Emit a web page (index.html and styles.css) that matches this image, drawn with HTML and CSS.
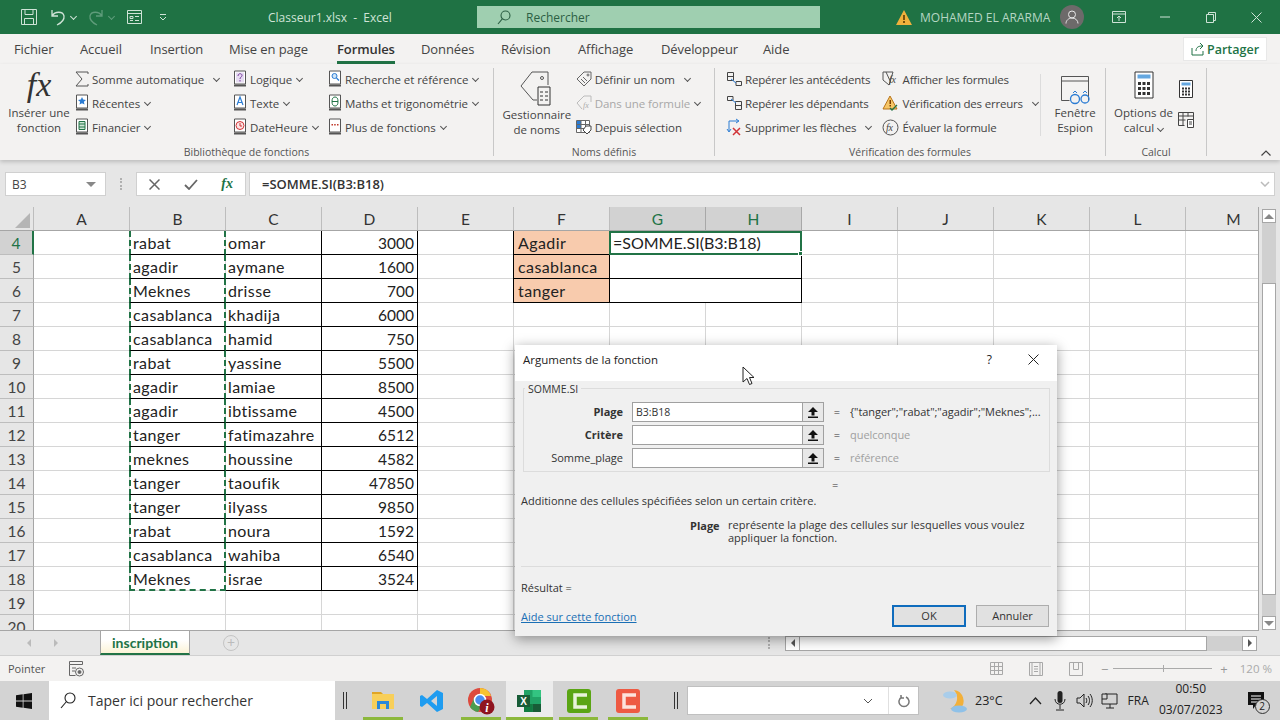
FILE: index.html
```html
<!DOCTYPE html>
<html lang="fr">
  <head>
    <meta charset="UTF-8" />
    <title>Classeur1.xlsx - Excel</title>
    <link rel="stylesheet" href="styles.css" />
  </head>
  <body>
    <header class="titlebar">
      <div class="qat">
        <svg class="qat-save" width="18" height="18" viewBox="0 0 18 18" fill="none" stroke="#cfe3d7"><path d="M1.500 1.500h15v15h-15zM5 1.500v5h8v-5M4.500 16.500v-6h9v6" /></svg>
        <svg class="qat-undo" width="16" height="18" viewBox="0 0 16 18" fill="none" stroke="#cfe3d7" stroke-width="1.300"><path d="M2 2v6h6M2 8c3-5 11-5 12 0 .6 4-3 7-7 9" /></svg>
        <span class="chev chev-light"></span>
        <svg class="qat-redo" width="16" height="18" viewBox="0 0 16 18" fill="none" stroke="#5f9c7b" stroke-width="1.300"><path d="M14 2v6H8M14 8C11 3 3 3 2 8c-.6 4 3 7 7 9" /></svg>
        <span class="chev chev-dim"></span>
        <svg class="qat-form" width="17" height="16" viewBox="0 0 17 16" fill="none" stroke="#cfe3d7"><path d="M1.500 1.500h14v13h-14zM1.500 4.500h14M4 7.500h3v2H4zM9 7.500h4M4 11.500h3M9 11.500h4" /></svg>
        <svg class="qat-more" width="8" height="8" viewBox="0 0 8 8" fill="none" stroke="#cfe3d7"><path d="M1 1.500h6M1 4l3 3 3-3" /></svg>
      </div>
      <div class="doc-title">Classeur1.xlsx&nbsp; - &nbsp;Excel</div>
      <div class="searchbox">
        <svg width="14" height="15" viewBox="0 0 14 15" fill="none" stroke="#2c5f44" stroke-width="1.100"><circle cx="8.500" cy="5.500" r="4.500" /><path d="M5.300 8.800 1 14" /></svg>
        <span>Rechercher</span>
      </div>
      <svg class="warn" width="16" height="15" viewBox="0 0 16 15"><path d="M8 0l8 15H0z" fill="#f0b13c" /><path d="M7.200 5h1.600v5H7.200zM7.200 11h1.600v2H7.200z" fill="#5b3b00" /></svg>
      <div class="username">MOHAMED EL ARARMA</div>
      <div class="avatar">
        <svg width="14" height="14" viewBox="0 0 14 14" fill="none" stroke="#e8e8e8"><circle cx="7" cy="4.500" r="3.500" /><path d="M1 13.500c0-3 2.500-5.500 6-5.500s6 2.500 6 5.500" /></svg>
      </div>
      <svg class="win-ribbon" width="14" height="12" viewBox="0 0 14 12" fill="none" stroke="#cfe3d7"><path d="M.5.5h13v11H.5zM.5 3h13M7 10V5M5 7l2-2 2 2" /></svg>
      <svg class="win-min" width="10" height="2" viewBox="0 0 10 2" stroke="#cfe3d7"><path d="M0 1h10" /></svg>
      <svg class="win-max" width="10" height="11" viewBox="0 0 10 11" fill="none" stroke="#cfe3d7"><path d="M.5 2.500h7v8h-7zM2.500 2.500v-2h7v8h-2" /></svg>
      <svg class="win-close" width="11" height="11" viewBox="0 0 11 11" stroke="#cfe3d7"><path d="M.5.5l10 10M10.500.5l-10 10" /></svg>
    </header>

    <nav class="tabs">
      <span class="tab tab-fichier">Fichier</span>
      <span class="tab tab-accueil">Accueil</span>
      <span class="tab tab-insertion">Insertion</span>
      <span class="tab tab-mise">Mise en page</span>
      <span class="tab tab-formules active">Formules</span>
      <span class="tab tab-donnees">Données</span>
      <span class="tab tab-revision">Révision</span>
      <span class="tab tab-affichage">Affichage</span>
      <span class="tab tab-dev">Développeur</span>
      <span class="tab tab-aide">Aide</span>
      <div class="share">
        <svg width="14" height="14" viewBox="0 0 14 14" fill="none" stroke="#217346"><path d="M1 6v7h11V9M5 9c0-4 3-5 6-5M9 1l3 3-3 3" /></svg>
        Partager
      </div>
    </nav>

    <section class="ribbon">
      <div class="group group-lib">
        <div class="group-body">
          <div class="big-btn big-fx">
            <span class="fx-big">fx</span>
            <span class="big-label">Insérer une<br />fonction</span>
          </div>
          <div class="rcol rcol-1">
            <div class="ritem">
              <svg class="ico" width="14" height="16" viewBox="0 0 14 16" fill="none" stroke="#555"><path d="M13 3V1H1l6 7-6 7h12v-2" /></svg>
              <span>Somme automatique</span><span class="chev chev-gap"></span>
            </div>
            <div class="ritem">
              <svg class="ico" width="14" height="18" viewBox="0 0 14 18"><path d="M1.500 1h11v13h-11z" fill="#fff" stroke="#555" /><path d="M1 15.500h12" stroke="#555" stroke-width="2" /><path d="M7 3l1.200 2.600 2.800.3-2.100 1.900.6 2.800L7 9.200l-2.500 1.400.6-2.800L3 5.900l2.800-.3z" fill="#2b7cd3" /></svg>
              <span>Récentes</span><span class="chev"></span>
            </div>
            <div class="ritem">
              <svg class="ico" width="14" height="18" viewBox="0 0 14 18"><path d="M1.500 1h11v13h-11z" fill="#fff" stroke="#555" /><path d="M1 15.500h12" stroke="#555" stroke-width="2" /><path d="M4 3.500h6v8H4zM4 6h6M4 9h6" fill="#cfe6d6" stroke="#217346" /></svg>
              <span>Financier</span><span class="chev"></span>
            </div>
          </div>
          <div class="rcol rcol-2">
            <div class="ritem">
              <svg class="ico" width="14" height="18" viewBox="0 0 14 18"><path d="M1.500 1h11v13h-11z" fill="#fff" stroke="#555" /><path d="M1 15.500h12" stroke="#555" stroke-width="2" /><path d="M3 2.500h8v10H3z" fill="#e6dcf2" /><path d="M5 6c0-3 4-3 4-.5C9 7 7 7 7 9M7 10v1.500" fill="none" stroke="#7b3fa0" /></svg>
              <span>Logique</span><span class="chev"></span>
            </div>
            <div class="ritem">
              <svg class="ico" width="14" height="18" viewBox="0 0 14 18"><path d="M1.500 1h11v13h-11z" fill="#fff" stroke="#555" /><path d="M1 15.500h12" stroke="#555" stroke-width="2" /><path d="M4 11l3-8 3 8M5 8.500h4" fill="none" stroke="#2b7cd3" stroke-width="1.200" /></svg>
              <span>Texte</span><span class="chev"></span>
            </div>
            <div class="ritem">
              <svg class="ico" width="14" height="18" viewBox="0 0 14 18"><path d="M1.500 1h11v13h-11z" fill="#fff" stroke="#555" /><path d="M1 15.500h12" stroke="#555" stroke-width="2" /><circle cx="7" cy="7.500" r="4" fill="#fbe3e3" stroke="#d13438" /><path d="M7 5v3h2" fill="none" stroke="#d13438" /></svg>
              <span>DateHeure</span><span class="chev"></span>
            </div>
          </div>
          <div class="rcol rcol-3">
            <div class="ritem">
              <svg class="ico" width="14" height="18" viewBox="0 0 14 18"><path d="M1.500 1h11v13h-11z" fill="#fff" stroke="#555" /><path d="M1 15.500h12" stroke="#555" stroke-width="2" /><circle cx="6.500" cy="6" r="2.500" fill="#cfe4f7" stroke="#2b7cd3" /><path d="M8.500 8l2.500 2.500" stroke="#2b7cd3" stroke-width="1.300" /></svg>
              <span>Recherche et référence</span><span class="chev"></span>
            </div>
            <div class="ritem">
              <svg class="ico" width="14" height="18" viewBox="0 0 14 18"><path d="M1.500 1h11v13h-11z" fill="#fff" stroke="#555" /><path d="M1 15.500h12" stroke="#555" stroke-width="2" /><ellipse cx="7" cy="7.500" rx="3" ry="4.500" fill="none" stroke="#217346" /><path d="M4 7.500h6" stroke="#217346" /></svg>
              <span>Maths et trigonométrie</span><span class="chev"></span>
            </div>
            <div class="ritem">
              <svg class="ico" width="14" height="18" viewBox="0 0 14 18"><path d="M1.500 1h11v13h-11z" fill="#fff" stroke="#555" /><path d="M1 15.500h12" stroke="#555" stroke-width="2" /><path d="M3.500 6h1.500v1.500H3.500zM6.200 6h1.500v1.500H6.200zM9 6h1.500v1.500H9z" fill="#c0392b" /></svg>
              <span>Plus de fonctions</span><span class="chev"></span>
            </div>
          </div>
        </div>
        <div class="group-label">Bibliothèque de fonctions</div>
      </div>

      <div class="group group-names">
        <div class="group-body">
          <div class="big-btn big-names">
            <svg class="big-ico" width="34" height="36" viewBox="0 0 34 36" fill="none" stroke="#555"><path d="M12 1h16v13M12 1L1 15l12 14h4" /><circle cx="22" cy="7" r="1.500" /><path d="M18 16h12v18H18zM20 21h3M25 21h3M20 25h3M25 25h3M20 29h3M25 29h3" stroke="#333" /></svg>
            <span class="big-label">Gestionnaire<br />de noms</span>
          </div>
          <div class="rcol rcol-names">
            <div class="ritem">
              <svg class="ico" width="16" height="16" viewBox="0 0 16 16" fill="none" stroke="#666"><path d="M8 1h7v7l-7 7-7-7zM5 8l4 4M7 6l4 4" /><circle cx="12" cy="4" r="1" /></svg>
              <span>Définir un nom</span><span class="chev chev-gap"></span>
            </div>
            <div class="ritem ritem-off">
              <svg class="ico" width="16" height="16" viewBox="0 0 16 16" fill="none" stroke="#bbb"><path d="M8 1h7v6M8 1L1 8l5 6" /><text x="7" y="13" font-family="Liberation Serif" font-style="italic" font-size="8" fill="#aaa" stroke="none">fx</text></svg>
              <span>Dans une formule</span><span class="chev"></span>
            </div>
            <div class="ritem">
              <svg class="ico" width="16" height="16" viewBox="0 0 16 16"><path d="M.5 1.500h13v12H.5z" fill="#fff" stroke="#666" /><path d="M1 2h4v4H1zM1 6h4v4H1z" fill="#2b7cd3" /><path d="M.5 5.500h13M.5 9.500h13M5 1.500v12M9.500 1.500v12" stroke="#666" fill="none" /><path d="M10 7h5v4l-4 4-4-4z" fill="#fff" stroke="#444" /></svg>
              <span>Depuis sélection</span>
            </div>
          </div>
        </div>
        <div class="group-label">Noms définis</div>
      </div>

      <div class="group group-audit">
        <div class="group-body">
          <div class="rcol rcol-trace">
            <div class="ritem">
              <svg class="ico" width="16" height="16" viewBox="0 0 16 16" fill="none"><path d="M1.500 1.500h6v8h-6zM1.500 5.500h6M10 10.500h5.500v4H10z" stroke="#444" /><path d="M5 8l5 4" stroke="#2b7cd3" /></svg>
              <span>Repérer les antécédents</span>
            </div>
            <div class="ritem">
              <svg class="ico" width="16" height="16" viewBox="0 0 16 16" fill="none"><path d="M1.500 1.500H7v4H1.500zM9.500 6.500h6v8h-6zM9.500 10.500h6" stroke="#444" /><path d="M5 4l5 4" stroke="#2b7cd3" /></svg>
              <span>Repérer les dépendants</span>
            </div>
            <div class="ritem">
              <svg class="ico" width="16" height="18" viewBox="0 0 16 18" fill="none"><path d="M3 13V3h9M1 11l2 3 2-3M10 1l3 2-3 2" stroke="#2b7cd3" /><path d="M7 10l7 7M14 10l-7 7" stroke="#d13438" stroke-width="1.500" /></svg>
              <span>Supprimer les flèches</span><span class="chev chev-gap"></span>
            </div>
          </div>
          <div class="rcol rcol-check">
            <div class="ritem">
              <svg class="ico" width="17" height="16" viewBox="0 0 17 16" fill="none" stroke="#555"><path d="M1 1h10l-4 13-6-5z" /><path d="M4 1l5 11" /><text x="7" y="12" font-family="Liberation Serif" font-style="italic" font-size="10" fill="#444" stroke="none">fx</text></svg>
              <span>Afficher les formules</span>
            </div>
            <div class="ritem">
              <svg class="ico" width="17" height="16" viewBox="0 0 17 16"><path d="M8 1l7 13H1z" fill="#f6c667" stroke="#b8741a" /><path d="M7.500 5h1.500v4H7.500zM7.500 10h1.500v1.500H7.500z" fill="#7a3e00" /><path d="M8 13l2 2 5-5" fill="none" stroke="#217346" stroke-width="1.300" /></svg>
              <span>Vérification des erreurs</span><span class="chev chev-gap"></span>
            </div>
            <div class="ritem">
              <svg class="ico" width="17" height="17" viewBox="0 0 17 17" fill="none" stroke="#555"><circle cx="8.500" cy="8.500" r="7.500" /><text x="4" y="12" font-family="Liberation Serif" font-style="italic" font-size="10" fill="#444" stroke="none">fx</text></svg>
              <span>Évaluer la formule</span>
            </div>
          </div>
          <div class="big-btn big-watch">
            <svg class="big-ico" width="30" height="30" viewBox="0 0 30 30" fill="none"><path d="M1.500 1.500h27v24M1.500 1.500v24h8M1.500 6h27" stroke="#555" /><circle cx="15" cy="24" r="4.500" stroke="#2b7cd3" stroke-width="1.300" /><circle cx="25" cy="24" r="4" stroke="#2b7cd3" stroke-width="1.300" /><path d="M13 18l2-2 2 2M23 18l2-2 2 2" stroke="#2b7cd3" /></svg>
            <span class="big-label">Fenêtre<br />Espion</span>
          </div>
        </div>
        <div class="group-label">Vérification des formules</div>
      </div>

      <div class="group group-calc">
        <div class="group-body">
          <div class="big-btn big-calc">
            <svg class="big-ico" width="20" height="28" viewBox="0 0 20 28"><path d="M1 1h18v26H1z" fill="#fff" stroke="#333" /><path d="M3.500 3.500h13v4h-13z" fill="#64a7e0" /><path d="M4 11h3v3H4zM8.500 11h3v3h-3zM13 11h3v3h-3zM4 16h3v3H4zM8.500 16h3v3h-3zM13 16h3v3h-3zM4 21h3v3H4zM8.500 21h3v3h-3zM13 21h3v3h-3z" fill="#333" /></svg>
            <span class="big-label">Options de<br />calcul<span class="chev chev-inline"></span></span>
          </div>
          <div class="calc-side">
            <svg width="14" height="18" viewBox="0 0 14 18"><path d="M.5.5h13v17H.5z" fill="#fff" stroke="#333" /><path d="M2.500 2.500h9v3h-9z" fill="#64a7e0" /><path d="M3 7.500h2v2H3zM6 7.500h2v2H6zM9 7.500h2v2H9zM3 10.500h2v2H3zM6 10.500h2v2H6zM9 10.500h2v2H9zM3 13.500h2v2H3zM6 13.500h2v2H6zM9 13.500h2v2H9z" fill="#333" /></svg>
            <svg width="16" height="16" viewBox="0 0 16 16" fill="none" stroke="#444"><path d="M.5.500h15v8M.5.500v13h6M.5 4h15M.5 8h7M5 .500v13M10 .500v4" /><path d="M9.500 7.500h6v8h-6z" fill="#fff" /><path d="M11 10h3M11 12h3" /></svg>
          </div>
        </div>
        <div class="group-label">Calcul</div>
      </div>
      <svg class="collapse" width="10" height="6" viewBox="0 0 10 6" fill="none" stroke="#444" stroke-width="1.200"><path d="M.5 5.500L5 1l4.500 4.500" /></svg>
    </section>

    <section class="formulabar">
      <div class="namebox"><span>B3</span><i class="tri"></i></div>
      <span class="grip"></span>
      <div class="fbtns">
        <svg width="11" height="11" viewBox="0 0 11 11" stroke="#666" stroke-width="1.500"><path d="M.5.5l10 10M10.500.5l-10 10" /></svg>
        <svg width="14" height="11" viewBox="0 0 14 11" fill="none" stroke="#666" stroke-width="1.800"><path d="M1 6l4 4 8-9" /></svg>
        <span class="fx-small">fx</span>
      </div>
      <div class="formula"><span>=SOMME.SI(B3:B18)</span>
        <svg width="10" height="6" viewBox="0 0 10 6" fill="none" stroke="#bbb" stroke-width="1.500"><path d="M1 1l4 4 4-4" /></svg>
      </div>
    </section>

    <section class="sheet">
      <div class="gridpane">
        <div class="colheads">
          <span class="corner"><i></i></span>
          <span>A</span><span>B</span><span>C</span><span>D</span><span>E</span><span>F</span>
          <span class="on">G</span><span class="on">H</span>
          <span>I</span><span>J</span><span>K</span><span>L</span><span>M</span>
        </div>
        <div class="rows">
          <div class="row"><span class="rh on">4</span><span class="c b">rabat</span><span class="c cc">omar</span><span class="c d">3000</span><span class="c f">Agadir</span><span class="c g sel">=SOMME.SI(B3:B18)<i class="handle"></i></span></div>
          <div class="row"><span class="rh">5</span><span class="c b">agadir</span><span class="c cc">aymane</span><span class="c d">1600</span><span class="c f">casablanca</span><span class="c g"></span></div>
          <div class="row"><span class="rh">6</span><span class="c b">Meknes</span><span class="c cc">drisse</span><span class="c d">700</span><span class="c f">tanger</span><span class="c g"></span></div>
          <div class="row"><span class="rh">7</span><span class="c b">casablanca</span><span class="c cc">khadija</span><span class="c d">6000</span></div>
          <div class="row"><span class="rh">8</span><span class="c b">casablanca</span><span class="c cc">hamid</span><span class="c d">750</span></div>
          <div class="row"><span class="rh">9</span><span class="c b">rabat</span><span class="c cc">yassine</span><span class="c d">5500</span></div>
          <div class="row"><span class="rh">10</span><span class="c b">agadir</span><span class="c cc">lamiae</span><span class="c d">8500</span></div>
          <div class="row"><span class="rh">11</span><span class="c b">agadir</span><span class="c cc">ibtissame</span><span class="c d">4500</span></div>
          <div class="row"><span class="rh">12</span><span class="c b">tanger</span><span class="c cc">fatimazahre</span><span class="c d">6512</span></div>
          <div class="row"><span class="rh">13</span><span class="c b">meknes</span><span class="c cc">houssine</span><span class="c d">4582</span></div>
          <div class="row"><span class="rh">14</span><span class="c b">tanger</span><span class="c cc">taoufik</span><span class="c d">47850</span></div>
          <div class="row"><span class="rh">15</span><span class="c b">tanger</span><span class="c cc">ilyass</span><span class="c d">9850</span></div>
          <div class="row"><span class="rh">16</span><span class="c b">rabat</span><span class="c cc">noura</span><span class="c d">1592</span></div>
          <div class="row"><span class="rh">17</span><span class="c b">casablanca</span><span class="c cc">wahiba</span><span class="c d">6540</span></div>
          <div class="row"><span class="rh">18</span><span class="c b last">Meknes</span><span class="c cc">israe</span><span class="c d">3524</span></div>
          <div class="row"><span class="rh">19</span></div>
          <div class="row"><span class="rh">20</span></div>
        </div>
      </div>
      <div class="vscroll">
        <span class="sb-btn"><i class="tri tri-up"></i></span>
        <span class="sb-thumb"></span>
        <span class="sb-btn"><i class="tri"></i></span>
      </div>
    </section>

    <section class="sheetbar">
      <div class="sheetnav">
        <i class="arrow arrow-l"></i>
        <i class="arrow arrow-r"></i>
      </div>
      <div class="sheettab">inscription</div>
      <span class="addsheet">+</span>
      <span class="hgrip"></span>
      <div class="hscroll">
        <span class="hbtn"><i class="arrow arrow-l dark"></i></span>
        <span class="hthumb"></span>
        <span class="htrack"></span>
        <span class="hbtn"><i class="arrow arrow-r dark"></i></span>
      </div>
    </section>

    <footer class="statusbar">
      <span>Pointer</span>
      <svg class="st-macro" width="15" height="16" viewBox="0 0 15 16" fill="none" stroke="#666"><path d="M.5.5h13v3H.5zM.5 3.500v11h6M3 7h4M3 10h3" /><circle cx="10.500" cy="11" r="4" /><circle cx="10.500" cy="11" r="1.500" fill="#666" /></svg>
      <div class="st-right">
        <svg width="13" height="13" viewBox="0 0 13 13" fill="none" stroke="#a8a8a8"><path d="M.5.5h12v12H.5zM4.500.5v12M8.500.5v12M.5 4.500h12M.5 8.500h12" /></svg>
        <svg width="14" height="14" viewBox="0 0 14 14" fill="none" stroke="#a8a8a8"><path d="M.5.5h13v13H.5zM3 .5v13M11 .5v13M5 4.500h4M5 7h4M5 9.500h4" /></svg>
        <svg width="14" height="14" viewBox="0 0 14 14" fill="none" stroke="#a8a8a8"><path d="M.5.5h13v13H.5zM4.500.5v7h5v-7" /></svg>
        <div class="zoom"><span class="zm">−</span><span class="slider"><i></i></span><span class="zm">+</span></div>
        <span class="zoompct">120 %</span>
      </div>
    </footer>

    <footer class="taskbar">
      <svg class="tb-win" width="16" height="16" viewBox="0 0 16 16" fill="#111"><path d="M0 2.300l6.700-1v6.300H0zM7.500 1.200L16 0v7.600H7.500zM0 8.400h6.700v6.300l-6.700-1zM7.500 8.400H16V16l-8.500-1.200z" /></svg>
      <div class="tb-search">
        <svg width="16" height="17" viewBox="0 0 16 17" fill="none" stroke="#222" stroke-width="1.100"><circle cx="10" cy="6" r="5" /><path d="M6.500 9.500L1 16" /></svg>
        <span>Taper ici pour rechercher</span>
      </div>
      <span class="tb-bars"></span>
      <div class="tb-apps">
        <span class="tb-app ul app-w40">
          <svg width="22" height="22" viewBox="0 0 22 22"><path d="M0 2h9l2 2h-11z" fill="#e0a526" /><path d="M0 4h22v15H0z" fill="#f8cf59" /><path d="M5 11h12v8h-3v-5H8v5H5z" fill="#2b88d8" /></svg>
        </span>
        <span class="tb-app app-w58">
          <svg width="24" height="24" viewBox="0 0 24 24"><path d="M17 1l6 3v16l-6 3-10-9-5 4-2-1V7l2-1 5 4z" fill="#1f9cf0" /><path d="M17 7v10l-6-5z" fill="#d4d4d4" /></svg>
        </span>
        <span class="tb-app ul app-w40">
          <svg width="28" height="28" viewBox="0 0 28 28"><circle cx="13" cy="13" r="12" fill="#dd4b3e" /><path d="M13 1a12 12 0 0 1 11 8H13z" fill="#f7c331" /><path d="M3 20L8 9l6 11 -3 5A12 12 0 0 1 3 20z" fill="#4a9d50" /><circle cx="13" cy="13" r="5.500" fill="#4a8ef0" stroke="#fff" stroke-width="1.500" /><circle cx="20" cy="20" r="7.500" fill="#8f1420" /><text x="20" y="25" text-anchor="middle" font-family="Liberation Serif" font-style="italic" font-weight="bold" font-size="12" fill="#fff">i</text></svg>
        </span>
        <span class="tb-app ul tb-active">
          <svg width="25" height="22" viewBox="0 0 25 22"><path d="M7 0h17v22H7z" fill="#21a366" /><path d="M15.500 0H24v7h-8.500z" fill="#33c481" /><path d="M15.500 14H24v8h-8.500z" fill="#185c37" /><path d="M7 14h8.500v8H7z" fill="#107c41" /><path d="M0 5h13v12H0z" fill="#185c37" /><text x="6.500" y="15" text-anchor="middle" font-family="Liberation Sans" font-weight="bold" font-size="10" fill="#fff">X</text></svg>
        </span>
        <span class="tb-app ul app-w39">
          <svg width="24" height="24" viewBox="0 0 24 24"><rect width="24" height="24" rx="3" fill="#5aa514" /><path d="M20 6H8v12h12" fill="none" stroke="#e8f3da" stroke-width="3.500" /></svg>
        </span>
        <span class="tb-app ul app-w40 app-last">
          <svg width="24" height="24" viewBox="0 0 24 24"><rect width="24" height="24" rx="3" fill="#ee5a43" /><path d="M20 6H8v12h12" fill="none" stroke="#fde3dc" stroke-width="3.500" /></svg>
        </span>
      </div>
      <span class="tb-bars tb-bars-2"></span>
      <div class="tb-input">
        <svg class="tb-chev" width="10" height="6" viewBox="0 0 10 6" fill="none" stroke="#555"><path d="M1 1l4 4 4-4" /></svg>
        <span class="tb-refresh">
          <svg width="12" height="14" viewBox="0 0 12 14" fill="none" stroke="#777" stroke-width="1.500"><path d="M8 3a5 5 0 1 1-4 0M3 1v3h3" /></svg>
        </span>
      </div>
      <svg class="tb-weather" width="24" height="26" viewBox="0 0 24 26"><path d="M11 2a11 11 0 0 1 6 19H7A12 12 0 0 0 11 2z" fill="#f2b03a" /><ellipse cx="7" cy="7" rx="7" ry="3.500" fill="#a9cdea" /><ellipse cx="16" cy="21" rx="8" ry="3.500" fill="#8fc1e8" /></svg>
      <span class="tb-temp">23°C</span>
      <svg class="tb-up" width="13" height="8" viewBox="0 0 13 8" fill="none" stroke="#222" stroke-width="1.300"><path d="M1 7l5.500-6L12 7" /></svg>
      <svg class="tb-mic" width="12" height="20" viewBox="0 0 12 20"><rect x="3.500" y="0" width="5" height="12" rx="2.500" fill="#222" /><path d="M1 8c0 7 10 7 10 0M6 14v4M2 19h8" fill="none" stroke="#222" /></svg>
      <svg class="tb-speaker" width="17" height="15" viewBox="0 0 17 15" fill="none" stroke="#222"><path d="M1 5v5h3l4 4V1L4 5zM10 5c1 1.500 1 3.500 0 5M12 3c2 2.500 2 6.500 0 9M14 1c3 4 3 9 0 13" /></svg>
      <svg class="tb-net" width="17" height="16" viewBox="0 0 17 16" fill="none" stroke="#222"><path d="M4 1h12v10H1V6M9 11v4M5 15h8" /><path d="M1 1h5v5H1z" fill="#d4d4d4" /></svg>
      <span class="tb-lang">FRA</span>
      <div class="tb-clock"><span>00:50</span><span>03/07/2023</span></div>
      <div class="tb-notif">
        <svg width="16" height="18" viewBox="0 0 16 18"><path d="M0 0h16v13H8l-3 4v-4H0z" fill="#111" /><path d="M3 4h10M3 7h10M3 10h7" stroke="#fff" /></svg>
        <span class="badge">2</span>
      </div>
    </footer>

    <div class="dialog">
      <div class="dlg-title">
        <span>Arguments de la fonction</span>
        <span class="dlg-help">?</span>
        <svg width="11" height="11" viewBox="0 0 11 11" stroke="#222"><path d="M.5.5l10 10M10.500.5l-10 10" /></svg>
      </div>
      <div class="dlg-body">
        <div class="fieldset">
          <span class="legend">SOMME.SI</span>
          <div class="arg"><label class="strong">Plage</label><div class="input">B3:B18</div><span class="refbtn"><svg width="10" height="11" viewBox="0 0 10 11" fill="#111"><path d="M5 0l5 5H6.500v3.500h-3V5H0zM0 9.500h10V11H0z" /></svg></span><span class="eq">=</span><span class="val">{"tanger";"rabat";"agadir";"Meknes";...</span></div>
          <div class="arg"><label class="strong">Critère</label><div class="input"></div><span class="refbtn"><svg width="10" height="11" viewBox="0 0 10 11" fill="#111"><path d="M5 0l5 5H6.500v3.500h-3V5H0zM0 9.500h10V11H0z" /></svg></span><span class="eq">=</span><span class="val muted">quelconque</span></div>
          <div class="arg"><label>Somme_plage</label><div class="input"></div><span class="refbtn"><svg width="10" height="11" viewBox="0 0 10 11" fill="#111"><path d="M5 0l5 5H6.500v3.500h-3V5H0zM0 9.500h10V11H0z" /></svg></span><span class="eq">=</span><span class="val muted">référence</span></div>
        </div>
        <div class="eq-line">=</div>
        <p class="dlg-desc">Additionne des cellules spécifiées selon un certain critère.</p>
        <div class="dlg-arg">
          <span class="strong">Plage</span>
          <p>représente la plage des cellules sur lesquelles vous voulez appliquer la fonction.</p>
        </div>
        <div class="dlg-rule"></div>
        <p class="dlg-result">Résultat =</p>
        <div class="dlg-foot">
          <a class="dlg-link">Aide sur cette fonction</a>
          <span class="btn btn-ok">OK</span>
          <span class="btn">Annuler</span>
        </div>
      </div>
    </div>

    <svg class="cursor" width="13" height="20" viewBox="0 0 13 20"><path d="M1 1v15l4-3.500 2.500 6 2.500-1-2.500-6H12z" fill="#fff" stroke="#222" /></svg>
  </body>
</html>
```

FILE: styles.css
```css
* {
  box-sizing: border-box;
}

html,
body {
  margin: 0;
  width: 1280px;
  height: 720px;
  overflow: hidden;
}

body {
  position: relative;
  font-family: "Open Sans", "Noto Sans", sans-serif;
  font-size: 11.5px;
  color: #444;
  background: #e6e6e6;
}

/* small down chevron used all over the ribbon */
.chev {
  display: inline-block;
  width: 5px;
  height: 5px;
  margin-left: 5px;
  border-right: 1px solid #555;
  border-bottom: 1px solid #555;
  transform: translateY(-1px) rotate(45deg);
}

.chev-light {
  border-color: #cfe3d7;
}

.chev-dim {
  border-color: #5f9c7b;
}

.tri {
  display: block;
  width: 0;
  height: 0;
  border-left: 5px solid transparent;
  border-right: 5px solid transparent;
  border-top: 5px solid #888;
}

.tri-up {
  border-top: 0;
  border-bottom: 5px solid #888;
}

/* title bar */
.titlebar {
  display: flex;
  align-items: center;
  height: 34px;
  background: #1f7244;
  color: #cfe3d7;
  font-size: 12px;
}

.qat {
  display: flex;
  align-items: center;
  width: 268px;
  padding-left: 20px;
}

.qat-undo {
  margin-left: 12px;
}

.qat-redo {
  margin-left: 12px;
}

.qat-form {
  margin-left: 12px;
}

.qat-more {
  margin-left: 16px;
}

.doc-title {
  width: 209px;
}

.searchbox {
  display: flex;
  align-items: center;
  gap: 15px;
  width: 343px;
  height: 22px;
  padding-left: 20px;
  background: #9fcfb0;
  color: #2c5f44;
}

.warn {
  margin-left: 76px;
}

.username {
  margin-left: 8px;
  width: 140px;
  white-space: nowrap;
  color: #b5d6c3;
}

.avatar {
  display: flex;
  align-items: center;
  justify-content: center;
  width: 24px;
  height: 24px;
  border-radius: 50%;
  background: #6d6a6a;
}

.win-ribbon {
  margin-left: 28px;
}

.win-min {
  margin-left: 34px;
}

.win-max {
  margin-left: 36px;
}

.win-close {
  margin-left: 35px;
}

/* ribbon tabs */
.tabs {
  position: relative;
  display: flex;
  align-items: center;
  height: 30px;
  background: #f3f2f1;
  font-size: 13px;
}

.tab {
  position: absolute;
  top: 6px;
  white-space: nowrap;
  letter-spacing: -0.1px;
}

.tab-fichier { left: 14px; }
.tab-accueil { left: 80px; }
.tab-insertion { left: 150px; }
.tab-mise { left: 229px; }
.tab-formules { left: 337px; }
.tab-donnees { left: 421px; }
.tab-revision { left: 501px; }
.tab-affichage { left: 578px; }
.tab-dev { left: 661px; }
.tab-aide { left: 763px; }

.tab.active {
  height: 24px;
  font-weight: 600;
  color: #333;
  border-bottom: 3px solid #217346;
}

.share {
  display: flex;
  align-items: center;
  gap: 2px;
  margin-left: auto;
  margin-right: 13px;
  width: 84px;
  height: 24px;
  padding-left: 7px;
  background: #fff;
  border: 1px solid #e8e8e8;
  color: #217346;
  font-size: 12.5px;
  font-weight: 600;
}

/* ribbon */
.ribbon {
  position: relative;
  z-index: 1;
  display: flex;
  height: 96px;
  padding-top: 4px;
  background: #f3f2f1;
  box-shadow: 0 2px 4px rgba(0, 0, 0, 0.18);
}

.group {
  display: flex;
  flex-direction: column;
  border-right: 1px solid #c8c8c8;
  height: 88px;
}

.group-lib { width: 494px; }
.group-names { width: 221px; }
.group-audit { width: 391px; }
.group-calc { width: 101px; }

.group-body {
  display: flex;
  flex: none;
  height: 77px;
}

.group-label {
  height: 14px;
  line-height: 14px;
  text-align: center;
  font-size: 10.5px;
  color: #555;
  white-space: nowrap;
}

.big-btn {
  display: flex;
  flex-direction: column;
  align-items: center;
  text-align: center;
  white-space: nowrap;
  line-height: 15px;
}

.big-label {
  margin-top: auto;
  padding-bottom: 10px;
}

.big-fx {
  width: 75px;
  padding-left: 3px;
}

.fx-big {
  font-family: "Liberation Serif", serif;
  font-style: italic;
  font-size: 34px;
  line-height: 34px;
  color: #333;
}

.big-names {
  width: 82px;
  padding-left: 4px;
}

.big-ico {
  margin-top: 3px;
  flex-shrink: 0;
}

.rcol {
  display: flex;
  flex-direction: column;
  margin-top: -1px;
}

.ritem {
  display: flex;
  align-items: center;
  height: 24px;
  white-space: nowrap;
  letter-spacing: -0.05px;
}

.ritem .ico {
  flex-shrink: 0;
  margin-right: 3px;
}

.ritem-off {
  color: #a8a8a8;
}

.rcol-1 { width: 158px; }
.rcol-2 { width: 95px; }
.rcol-3 { width: 165px; }
.rcol-names { width: 139px; }
.rcol-trace { width: 167px; padding-left: 11px; }
.rcol-check { width: 159px; }

.rcol-trace .ritem {
  letter-spacing: -0.2px;
}

.rcol-check .ritem {
  letter-spacing: -0.2px;
}

.rcol-check .ico {
  margin-right: 4px;
}

.chev-gap {
  margin-left: 10px;
}

.chev-inline {
  margin-left: 4px;
}

.big-watch {
  width: 65px;
  height: 62px;
  margin-top: 6px;
  padding-left: 4px;
  border-left: 1px solid #dcdcdc;
}

.big-watch .big-ico {
  margin-top: 1px;
}

.big-watch .big-label {
  padding-bottom: 1px;
}

.big-calc {
  width: 72px;
  padding-left: 3px;
}

.calc-side {
  display: flex;
  flex-direction: column;
  align-items: center;
  gap: 14px;
  padding-top: 12px;
}

.collapse {
  position: absolute;
  right: 9px;
  bottom: 4px;
}

/* formula bar */
.formulabar {
  display: flex;
  align-items: center;
  height: 47px;
  padding: 1px 5px 0;
  background: #e6e6e6;
}

.namebox {
  display: flex;
  align-items: center;
  justify-content: space-between;
  width: 101px;
  height: 24px;
  padding: 0 9px 0 6px;
  background: #fff;
  border: 1px solid #d0d0d0;
  font-size: 12px;
}

.grip {
  width: 2px;
  height: 12px;
  margin: 0 14px;
  border-left: 2px dotted #b0b0b0;
}

.fbtns {
  display: flex;
  align-items: center;
  justify-content: space-between;
  width: 110px;
  height: 24px;
  padding: 0 12px;
  background: #fff;
  border: 1px solid #d0d0d0;
}

.fx-small {
  font-family: "Liberation Serif", serif;
  font-style: italic;
  font-weight: bold;
  font-size: 14px;
  color: #217346;
}

.formula {
  display: flex;
  align-items: center;
  justify-content: space-between;
  flex: 1;
  height: 24px;
  margin-left: 3px;
  padding: 0 4px 0 12px;
  background: #fff;
  border: 1px solid #d0d0d0;
  font-size: 13px;
  font-weight: 600;
  color: #333;
}

/* sheet */
.sheet {
  display: flex;
  height: 424px;
}

.gridpane {
  width: 1259px;
  height: 424px;
  border-right: 1px solid #a6a6a6;
  border-bottom: 1px solid #a6a6a6;
  font-family: Lato, "Liberation Sans", sans-serif;
}

.colheads,
.row {
  display: grid;
  grid-template-columns: 34px repeat(13, 96px);
}

.colheads {
  height: 24px;
  overflow: hidden;
  background: #e6e6e6;
  border-bottom: 1px solid #a6a6a6;
  font-size: 15.5px;
  color: #333;
}

.colheads span {
  text-align: center;
  line-height: 24px;
  border-right: 1px solid #bdbdbd;
}

.colheads .on {
  background: #d2d2d2;
  color: #217346;
  border-right-color: #a8a8a8;
}

.corner {
  position: relative;
}

.corner i {
  position: absolute;
  right: 3px;
  bottom: 3px;
  border-left: 15px solid transparent;
  border-bottom: 15px solid #b5b5b5;
}

.rows {
  height: 399px;
  overflow: hidden;
  background-color: #fff;
  background-image: linear-gradient(to right, transparent 95px, #d6d6d6 95px),
    linear-gradient(to bottom, transparent 23px, #d6d6d6 23px);
  background-size: 96px 24px;
  background-position: 34px 0;
}

.row {
  grid-template-rows: 24px;
  height: 24px;
  font-size: 16px;
  color: #222;
  line-height: 23px;
}

.rh {
  grid-column: 1;
  text-align: center;
  font-size: 15.5px;
  line-height: 24px;
  color: #444;
  background: #e6e6e6;
  border-right: 1px solid #a6a6a6;
  border-bottom: 1px solid #bdbdbd;
}

.rh.on {
  background: #d2d2d2;
  color: #217346;
  border-right: 2px solid #217346;
}

.c {
  padding: 0 2px;
  white-space: nowrap;
  letter-spacing: 0.4px;
  border-right: 1px solid #000;
  border-bottom: 1px solid #000;
}

.b {
  grid-column: 3;
  margin-left: -1px;
  border-left: 2px dashed #217346;
  border-right: 2px dashed #217346;
}

.b.last {
  border-bottom: 2px dashed #217346;
}

.cc {
  grid-column: 4;
}

.d {
  grid-column: 5;
  padding-right: 3px;
  text-align: right;
  font-size: 15.5px;
  line-height: 24px;
  letter-spacing: 0;
}

.f {
  grid-column: 7;
  margin-left: -1px;
  background: #f8cbad;
  border-left: 1px solid #000;
  padding-left: 4px;
}

.g {
  grid-column: 8 / span 2;
  background: #fff;
}

.sel {
  position: relative;
  z-index: 1;
  overflow: visible;
  padding-left: 2px;
  line-height: 20px;
  letter-spacing: 0;
  margin-left: -1px;
  border: 2px solid #217346;
}

.handle {
  position: absolute;
  right: -3px;
  bottom: -3px;
  width: 5px;
  height: 5px;
  background: #217346;
  border: 1px solid #fff;
}

.vscroll {
  display: flex;
  flex-direction: column;
  align-items: stretch;
  width: 14px;
  height: 421px;
  margin: 2px 0 0 3px;
  background: #d0d0d0;
}

.sb-btn {
  display: flex;
  align-items: center;
  justify-content: center;
  height: 14px;
  background: #fff;
  border: 1px solid #a6a6a6;
}

.sb-thumb {
  height: 312px;
  margin: 60px 0 auto;
  background: #fff;
  border: 1px solid #a6a6a6;
}

/* sheet tabs and horizontal scroll */
.sheetbar {
  display: flex;
  align-items: center;
  height: 25px;
  background: #e6e6e6;
  border-bottom: 1px solid #d0d0d0;
}

.sheetnav {
  display: flex;
  gap: 23px;
  width: 100px;
  padding-left: 27px;
}

.arrow {
  display: block;
  width: 0;
  height: 0;
  border-top: 4px solid transparent;
  border-bottom: 4px solid transparent;
}

.arrow-l {
  border-right: 4px solid #bbb;
}

.arrow-r {
  border-left: 4px solid #bbb;
}

.arrow-l.dark {
  border-right-color: #555;
}

.arrow-r.dark {
  border-left-color: #555;
}

.sheettab {
  align-self: flex-start;
  width: 90px;
  height: 24px;
  text-align: center;
  line-height: 23px;
  font-family: Lato, "Liberation Sans", sans-serif;
  font-size: 14px;
  font-weight: 700;
  color: #217346;
  background: linear-gradient(to bottom, #fff 40%, #fbf3d6);
  border-left: 1px solid #a6a6a6;
  border-right: 1px solid #a6a6a6;
  border-bottom: 2px solid #217346;
}

.addsheet {
  display: flex;
  align-items: center;
  justify-content: center;
  width: 16px;
  height: 16px;
  margin-left: 33px;
  border: 1px solid #c4c4c4;
  border-radius: 50%;
  color: #bbb;
  font-size: 14px;
  line-height: 1;
}

.hgrip {
  width: 2px;
  height: 12px;
  margin-left: 529px;
  border-left: 2px dotted #b0b0b0;
}

.hscroll {
  display: flex;
  width: 472px;
  height: 15px;
  margin-left: 15px;
}

.hbtn {
  display: flex;
  align-items: center;
  justify-content: center;
  width: 15px;
  background: #fff;
  border: 1px solid #a6a6a6;
}

.hthumb {
  width: 407px;
  background: #fff;
  border: 1px solid #a6a6a6;
  border-left: 0;
}

.htrack {
  flex: 1;
  background: #d0d0d0;
}

/* status bar */
.statusbar {
  display: flex;
  align-items: center;
  height: 25px;
  padding-left: 8px;
  background: #f3f2f1;
  font-size: 11px;
  color: #555;
}

.st-macro {
  margin-left: 24px;
}

.st-right {
  display: flex;
  align-items: center;
  gap: 26px;
  margin-left: auto;
  margin-right: 8px;
}

.zoom {
  display: flex;
  align-items: center;
  gap: 5px;
  margin-left: -8px;
}

.zm {
  font-size: 13px;
  color: #999;
}

.slider {
  position: relative;
  width: 99px;
  height: 1px;
  margin-right: 3px;
  background: #aaa;
}

.slider i {
  position: absolute;
  left: 50px;
  top: -3px;
  width: 1px;
  height: 7px;
  background: #aaa;
}

.zoompct {
  margin-left: -14px;
  color: #aaa;
  font-size: 11.5px;
}

/* windows taskbar */
.taskbar {
  position: relative;
  display: flex;
  align-items: center;
  height: 39px;
  background: #d3d3d3;
  color: #222;
}

.tb-win {
  margin-left: 16px;
}

.tb-search {
  display: flex;
  align-items: center;
  gap: 12px;
  width: 286px;
  height: 39px;
  margin-left: 17px;
  padding-left: 11px;
  background: #fff;
  font-size: 14px;
  color: #333;
}

.tb-bars {
  width: 4px;
  height: 17px;
  margin-left: 8px;
  border-left: 1px solid #333;
  border-right: 1px solid #333;
}

.tb-apps {
  display: flex;
  align-items: center;
  height: 39px;
  margin-left: 16px;
}

.tb-app {
  position: relative;
  display: flex;
  align-items: center;
  justify-content: center;
  height: 39px;
}

.app-w40 { width: 40px; }
.app-w58 { width: 58px; }
.app-w39 { width: 39px; margin-left: 6px; }
.app-last { margin-left: 10px; }

.tb-active {
  width: 47px;
  margin-left: 5px;
  background: #ececec;
}

.tb-app.ul::after {
  content: "";
  position: absolute;
  left: 0;
  right: 0;
  bottom: 0;
  height: 3px;
  background: #8cb83c;
}

.tb-bars-2 {
  margin-left: 26px;
}

.tb-input {
  display: flex;
  align-items: center;
  justify-content: flex-end;
  width: 232px;
  height: 29px;
  margin-left: 9px;
  background: #fff;
  border: 1px solid #c0c0c0;
}

.tb-chev {
  margin-right: 15px;
}

.tb-refresh {
  display: flex;
  align-items: center;
  justify-content: center;
  width: 30px;
  height: 27px;
  border-left: 1px solid #e0e0e0;
}

.tb-weather {
  margin-left: 24px;
}

.tb-temp {
  margin-left: 8px;
  font-size: 12.5px;
}

.tb-up {
  margin-left: 26px;
}

.tb-mic {
  margin-left: 12px;
}

.tb-speaker {
  margin-left: 10px;
}

.tb-net {
  margin-left: 8px;
}

.tb-lang {
  margin-left: 10px;
  font-size: 12px;
}

.tb-clock {
  display: flex;
  flex-direction: column;
  align-items: center;
  gap: 5px;
  width: 60px;
  margin-left: 12px;
  margin-top: -2px;
  font-size: 12px;
  line-height: 16px;
}

.tb-notif {
  position: relative;
  margin-left: 27px;
  height: 18px;
}

.badge {
  position: absolute;
  left: 7px;
  top: 7px;
  width: 15px;
  height: 15px;
  border: 1px solid #333;
  border-radius: 50%;
  background: #d3d3d3;
  text-align: center;
  font-size: 10px;
  line-height: 13px;
}

/* function arguments dialog */
.dialog {
  position: absolute;
  z-index: 5;
  left: 515px;
  top: 345px;
  width: 542px;
  height: 291px;
  background: #f0f0f0;
  box-shadow: 0 3px 12px rgba(0, 0, 0, 0.4);
  font-size: 11px;
  color: #333;
}

.dlg-title {
  display: flex;
  align-items: center;
  height: 36px;
  padding: 0 18px 8px 8px;
  background: #fff;
  font-size: 11.5px;
  color: #222;
}

.dlg-help {
  margin-left: auto;
  margin-right: 36px;
  font-size: 12px;
}

.dlg-body {
  position: relative;
  padding: 7px 6px 0;
}

.fieldset {
  position: relative;
  width: 527px;
  height: 84px;
  margin-left: 2px;
  padding-top: 13px;
  border: 1px solid #dcdcdc;
}

.legend {
  position: absolute;
  left: 1px;
  top: -6px;
  padding: 0 3px;
  background: #f0f0f0;
  line-height: 13px;
  font-size: 10.5px;
}

.arg {
  display: flex;
  align-items: center;
  height: 20px;
  margin-bottom: 3px;
}

.arg label {
  width: 99px;
  padding-bottom: 2px;
  text-align: right;
  white-space: nowrap;
}

.strong {
  font-weight: 700;
}

.input {
  width: 171px;
  height: 20px;
  margin-left: 9px;
  padding-left: 3px;
  background: #fff;
  border: 1px solid #a0a0a0;
  font-size: 10.5px;
  line-height: 18px;
}

.refbtn {
  display: flex;
  align-items: center;
  justify-content: center;
  width: 21px;
  height: 20px;
  background: #e8e8e8;
  border: 1px solid #a0a0a0;
  border-left: 0;
}

.eq {
  width: 26px;
  padding-bottom: 2px;
  text-align: center;
}

.val {
  padding-bottom: 2px;
  white-space: nowrap;
  letter-spacing: -0.05px;
}

.muted {
  color: #a0a0a0;
}

.eq-line {
  width: 100%;
  margin-top: 6px;
  padding-left: 311px;
  line-height: 14px;
}

.dlg-desc {
  margin: 0;
  line-height: 17px;
}

.dlg-arg {
  display: flex;
  margin-top: 9px;
  padding-left: 169px;
}

.dlg-arg .strong {
  width: 38px;
}

.dlg-arg p {
  margin: 0;
  width: 310px;
  line-height: 13px;
}

.dlg-rule {
  height: 1px;
  margin-top: 22px;
  background: #dcdcdc;
}

.dlg-result {
  margin: 13px 0 0;
  line-height: 15px;
}

.dlg-foot {
  display: flex;
  align-items: center;
  margin-top: 10px;
}

.dlg-link {
  margin-right: auto;
  color: #1a6fb5;
  text-decoration: underline;
}

.btn {
  width: 73px;
  height: 22px;
  margin-left: 10px;
  margin-right: 2px;
  text-align: center;
  line-height: 20px;
  background: #e1e1e1;
  border: 1px solid #adadad;
  font-size: 11px;
}

.btn-ok {
  width: 74px;
  margin-right: 0;
  line-height: 18px;
  border: 2px solid #0f6cbd;
}

.cursor {
  position: absolute;
  z-index: 6;
  left: 742px;
  top: 366px;
}
```
